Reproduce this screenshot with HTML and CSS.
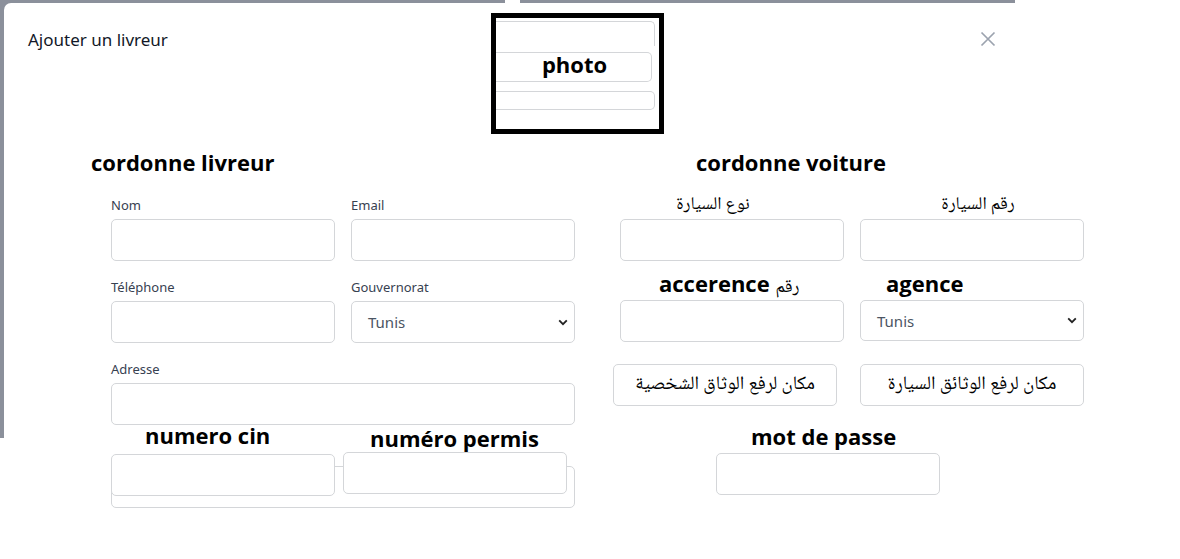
FILE: index.html
```html
<!DOCTYPE html>
<html lang="fr">
<head>
<meta charset="utf-8">
<title>Ajouter un livreur</title>
<link rel="stylesheet" href="styles.css">
</head>
<body>
<div class="screen">
  <div class="backdrop"></div>
  <div class="modal">
    <header class="modal-head">
      <h1 class="title">Ajouter un livreur</h1>
      <div class="photo-box">
        <div class="ph ph-1"></div>
        <div class="ph ph-2">photo</div>
        <div class="ph ph-3"></div>
      </div>
      <button class="close" type="button" aria-label="Fermer">
        <svg width="16" height="16" viewBox="0 0 16 16"><path d="M1.5 1.5 L14.5 14.5 M14.5 1.5 L1.5 14.5" stroke="#9ca3af" stroke-width="1.7" fill="none"/></svg>
      </button>
    </header>

    <div class="modal-body">
      <section class="col col-left">
        <h2 class="note note-left">cordonne livreur</h2>
        <div class="pair pair-first">
          <div class="field"><label class="lbl">Nom</label><input class="inp" type="text"></div>
          <div class="field"><label class="lbl">Email</label><input class="inp" type="text"></div>
        </div>
        <div class="pair">
          <div class="field"><label class="lbl">Téléphone</label><input class="inp" type="text"></div>
          <div class="field"><label class="lbl">Gouvernorat</label>
            <div class="select"><span>Tunis</span><svg width="10" height="7" viewBox="0 0 10 7"><path d="M1.2 1.3 L5 5.2 L8.8 1.3" stroke="#222" stroke-width="1.8" fill="none"/></svg></div>
          </div>
        </div>
        <div class="field field-wide"><label class="lbl">Adresse</label><input class="inp inp-wide" type="text"></div>
        <div class="stack">
          <div class="ghost"></div>
          <div class="pair pair-tight">
            <div class="field"><div class="note note-cin">numero cin</div><input class="inp cin-inp" type="text"></div>
            <div class="field permis"><div class="note note-permis">numéro permis</div><input class="inp permis-inp" type="text"></div>
          </div>
        </div>
      </section>

      <section class="col col-right">
        <h2 class="note note-right">cordonne voiture</h2>
        <div class="pair">
          <div class="field"><label class="ar-lbl ar-lbl-1" dir="rtl">نوع السيارة</label><input class="inp" type="text"></div>
          <div class="field"><label class="ar-lbl ar-lbl-2" dir="rtl">رقم السيارة</label><input class="inp" type="text"></div>
        </div>
        <div class="pair">
          <div class="field"><div class="note note-acc"><span>accerence</span> <span class="ar-inline">رقم</span></div><input class="inp inp-2" type="text"></div>
          <div class="field"><div class="note note-agence">agence</div>
            <div class="select select-2"><span>Tunis</span><svg width="10" height="7" viewBox="0 0 10 7"><path d="M1.2 1.3 L5 5.2 L8.8 1.3" stroke="#222" stroke-width="1.8" fill="none"/></svg></div>
          </div>
        </div>
        <div class="pair pair-btns">
          <button class="upload upload-1" type="button" dir="rtl">مكان لرفع الوثاق الشخصية</button>
          <button class="upload" type="button" dir="rtl">مكان لرفع الوثائق السيارة</button>
        </div>
        <div class="field pass">
          <div class="note note-pass">mot de passe</div>
          <input class="inp pass-inp" type="password">
        </div>
      </section>
    </div>
  </div>
</div>
</body>
</html>
```

FILE: styles.css
```css
* { box-sizing: border-box; }

html, body {
  margin: 0;
  padding: 0;
  background: #ffffff;
}

body {
  font-family: "Noto Sans", "DejaVu Sans", sans-serif;
  color: #1f2937;
}

.screen {
  position: relative;
  width: 1180px;
  height: 559px;
  overflow: hidden;
  background: #ffffff;
}

.backdrop {
  width: 1015px;
  height: 438px;
  background: linear-gradient(to right, #8b909b 0, #8b909b 505px, #ffffff 505px, #ffffff 520px, #8b909b 520px);
}

.modal {
  position: absolute;
  top: 3px;
  left: 4px;
  right: 0;
  bottom: 0;
  background: #ffffff;
  border-top-left-radius: 7px;
}

/* header */
.modal-head {
  display: grid;
  grid-template-columns: 487px 173px 1fr;
  height: 131px;
}

.title {
  margin: 25px 0 0 24px;
  font-size: 17px;
  line-height: 24px;
  font-weight: 400;
  color: #111827;
  align-self: start;
}

.photo-box {
  margin-top: 10px;
  width: 173px;
  height: 121px;
  border: 5px solid #000;
  overflow: hidden;
  display: flex;
  flex-direction: column;
  align-self: start;
}

.ph {
  border: 1px solid #d4d6d9;
  border-left: none;
  border-radius: 0 5px 5px 0;
}

.ph-1 {
  margin-top: 3px;
  margin-right: 4px;
  height: 25px;
  border-bottom: none;
  border-radius: 0 5px 0 0;
}

.ph-2 {
  margin-top: 6px;
  margin-right: 7px;
  height: 30px;
  font-family: "Open Sans", sans-serif;
  font-weight: 700;
  font-size: 22px;
  line-height: 23px;
  color: #000;
  text-align: center;
  padding-left: 2px;
}

.ph-3 {
  margin-top: 9px;
  margin-right: 4px;
  height: 19px;
}

.close {
  margin: 28px 0 0 316px;
  padding: 0;
  width: 16px;
  height: 16px;
  border: none;
  background: none;
  justify-self: start;
  align-self: start;
  display: block;
}

.close svg { display: block; }

/* body */
.modal-body {
  display: flex;
  align-items: flex-start;
}

.col {
  width: 464px;
  display: flex;
  flex-direction: column;
}

.col-left { margin-left: 107px; }
.col-right { margin-left: 45px; }

.note {
  font-family: "Open Sans", sans-serif;
  font-weight: 700;
  font-size: 22px;
  color: #000;
  margin: 0;
  line-height: 24px;
}

.note-left {
  margin: 16px 0 0 -20px;
}

.note-right {
  margin: 16px 0 0 76px;
}

.pair {
  display: grid;
  grid-template-columns: 224px 224px;
  column-gap: 16px;
}

.field {
  display: flex;
  flex-direction: column;
}

.lbl {
  display: block;
  margin-top: 17px;
  font-size: 13px;
  line-height: 18px;
  font-weight: 400;
  color: #374151;
}

.pair-first .lbl { margin-top: 22px; }

.inp {
  display: block;
  width: 224px;
  height: 42px;
  margin: 5px 0 0 0;
  padding: 0 12px;
  border: 1px solid #d4d6d9;
  border-radius: 5px;
  background: #fff;
  font: inherit;
  outline: none;
}

.inp-wide { width: 464px; }

.select {
  margin-top: 5px;
  height: 42px;
  border: 1px solid #d4d6d9;
  border-radius: 5px;
  display: flex;
  align-items: center;
  justify-content: space-between;
  padding: 0 6px 0 16px;
  font-size: 15px;
  color: #4b5563;
}

.select svg { display: block; }

/* cin / permis stacked over hidden field */
.stack {
  display: grid;
}

.stack > * {
  grid-area: 1 / 1;
}

.ghost {
  margin-top: 41px;
  height: 42px;
  border: 1px solid #d4d6d9;
  border-radius: 5px;
}

.pair-tight {
  column-gap: 8px;
  align-items: start;
}

.note-cin {
  margin: -2px 0 0 34px;
}

.cin-inp { margin-top: 7px; }

.permis {
  margin-top: 1px;
}

.note-permis {
  margin-left: 27px;
}

.permis-inp { margin-top: 2px; }

/* right column */
.ar-lbl {
  display: block;
  margin-top: 19px;
  font-family: "Noto Naskh Arabic", "Noto Sans Arabic", "DejaVu Sans", sans-serif;
  font-size: 18px;
  line-height: 24px;
  color: #000;
  text-align: center;
}

.ar-lbl + .inp { margin-top: 2px; }

.ar-lbl-1 { padding-right: 38px; }
.ar-lbl-2 { padding-left: 12px; }

.note-acc {
  margin: 10px 0 0 39px;
  white-space: nowrap;
}

.ar-inline {
  font-family: "Noto Naskh Arabic", "Noto Sans Arabic", "DejaVu Sans", sans-serif;
  font-weight: 400;
  font-size: 18px;
  line-height: 0;
}

.note-agence {
  margin: 10px 0 0 26px;
}

.inp-2, .select-2 { margin-top: 5px; }

.select-2 { height: 41px; }

.pair-btns {
  margin-top: 22px;
}

.upload {
  height: 42px;
  border: 1px solid #d4d6d9;
  border-radius: 5px;
  background: #fff;
  font-family: "Noto Naskh Arabic", "Noto Sans Arabic", "DejaVu Sans", sans-serif;
  font-size: 19px;
  color: #000;
  padding: 0 8px;
  text-align: center;
}

.upload-1 {
  margin-left: -7px;
  width: 224px;
}

.pass {
  margin: 18px 0 0 96px;
  width: 224px;
}

.note-pass {
  margin-left: 35px;
}

.pass-inp { margin-top: 5px; }
```
